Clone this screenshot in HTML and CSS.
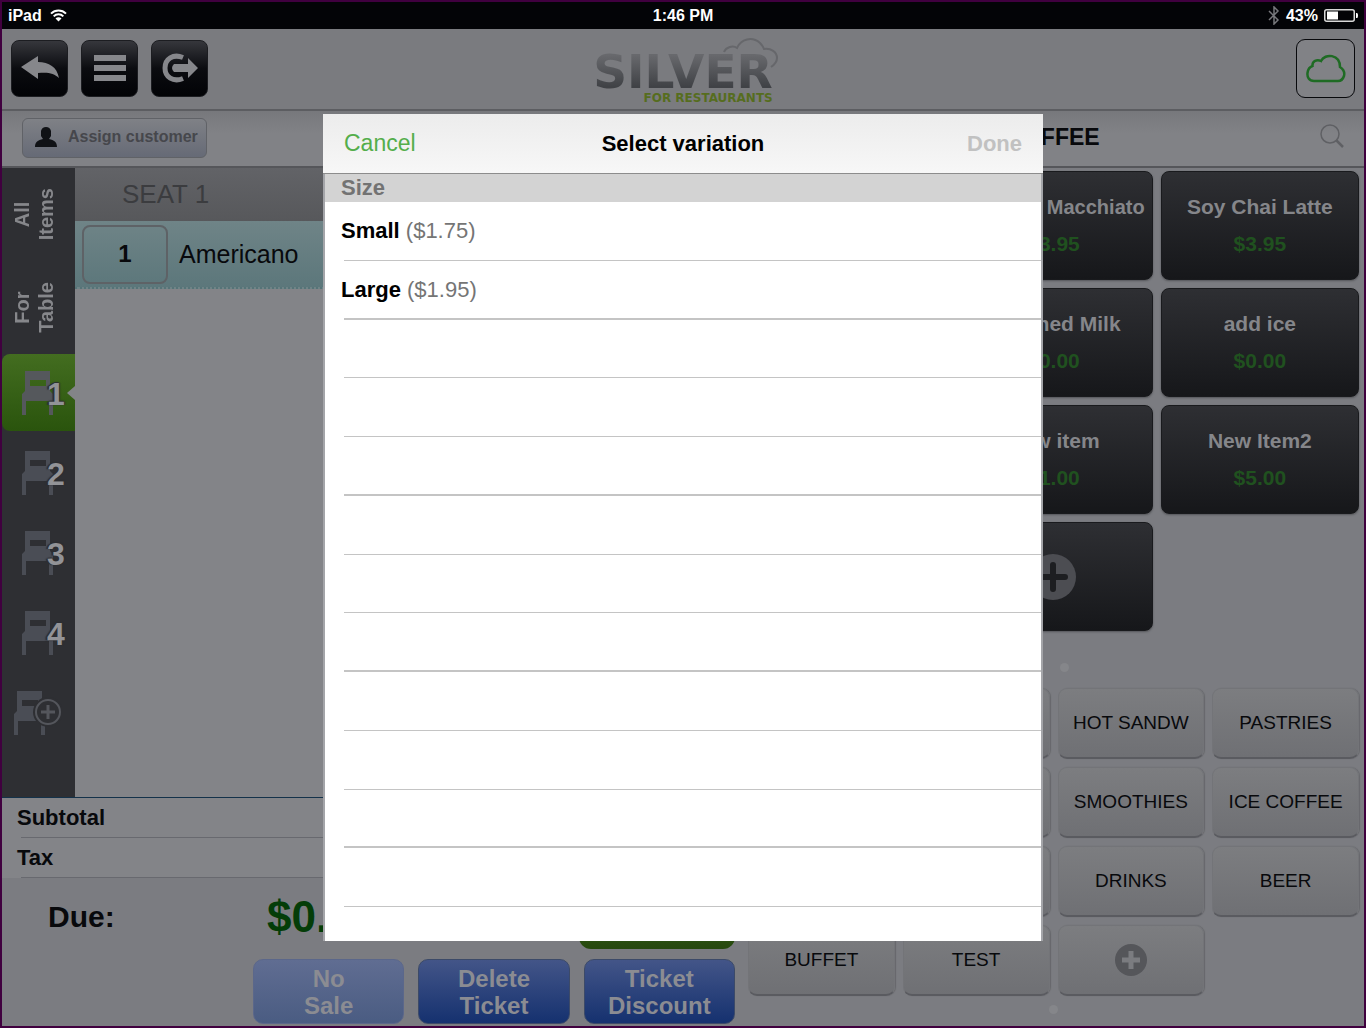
FILE: index.html
```html
<!DOCTYPE html>
<html lang="en">
<head>
<meta charset="utf-8">
<meta name="viewport" content="width=device-width, initial-scale=1">
<title>Silver for Restaurants</title>
<link rel="stylesheet" href="styles.css">
</head>
<body>
<svg class="defs" aria-hidden="true">
  <defs>
    <symbol id="chair" viewBox="0 0 32 44"><path fill-rule="evenodd" d="M3 0h25v20l3 3v21h-4V30H4v14H0V23l3-3zM8 9v6h16V9z"/></symbol>
  </defs>
</svg>
<div class="app">
  <div class="status">
    <div class="status-side">
      <span>iPad</span>
      <svg width="17" height="13" viewBox="0 0 17 13" fill="none" stroke="#fff" stroke-width="2"><path d="M1 4.600a10.500 10.500 0 0 1 15 0M3.700 7.400a6.700 6.700 0 0 1 9.600 0"/><path d="M8.500 12.500 5.500 9.400a4.200 4.200 0 0 1 6 0z" fill="#fff" stroke="none"/></svg>
    </div>
    <span>1:46 PM</span>
    <div class="status-side status-right">
      <svg width="12" height="19" viewBox="0 0 12 19" fill="none" stroke="#77787c" stroke-width="1.500"><path d="M1 5l9 9-4 4V1l4 4-9 9"/></svg>
      <span>43%</span>
      <svg width="34" height="13" viewBox="0 0 34 13"><rect x=".75" y=".75" width="29.500" height="11.500" rx="2" fill="none" stroke="#d8d8d8" stroke-width="1.500"/><rect x="3" y="2.500" width="11" height="8" fill="#fff"/><path d="M32 4h1q1 0 1 2.500T33 9h-1z" fill="#fff"/></svg>
    </div>
  </div>

  <header class="topbar">
    <div class="tools">
      <button class="tool" aria-label="Back"><svg width="38" height="24" viewBox="0 0 38 24" fill="#86878b"><path d="M0 11 17 0v6c11 0 19 5 21 16-5-5-11-6-21-5v6z"/></svg></button>
      <button class="tool" aria-label="Menu"><svg width="32" height="28" viewBox="0 0 32 28" fill="#86878b"><path d="M0 1h32v6H0zM0 11h32v6H0zM0 21h32v6H0z"/></svg></button>
      <button class="tool" aria-label="Sign out"><svg width="38" height="30" viewBox="0 0 38 30"><path d="M22 4.500C12 .500 4 6 4 15s8 14.500 18 10.500" fill="none" stroke="#86878b" stroke-width="5"/><path d="M13 11h14V5l10 10-10 10v-6H13q-4-4 0-8z" fill="#86878b"/></svg></button>
    </div>
    <div class="logo">
      <svg class="logo-cloud" width="56" height="30" viewBox="0 0 56 30" fill="none" stroke="#66676b" stroke-width="2"><path d="M1 14c2-5 9-7 13-4C18 1 29-2 37 5q3 3 4 6c7-1 13 3 13 9q0 5-6 9"/></svg>
      <span class="logo-name">SILVER</span>
      <span class="logo-sub">FOR RESTAURANTS</span>
    </div>
    <button class="cloud" aria-label="Cloud sync"><svg width="40" height="30" viewBox="0 0 40 30" fill="none" stroke="#1f6b24" stroke-width="2.500"><path d="M8 28C3 28 1 24 1.500 20c.5-4 2-6 5-7C6 8 11 6 15 8c4-8 19-7 19 6 3 2 5 5 4 9-1 3-3 5-6 5z"/></svg></button>
  </header>

  <main class="columns">
    <section class="order">
      <div class="subbar">
        <button class="assign">
          <svg width="22" height="20" viewBox="0 0 22 20" fill="#101216"><path d="M6 9V4q1-4 5-4t5 4v5l-2 3c5 1 8 3 8 8H0c0-5 3-7 8-8z"/></svg>
          Assign customer
        </button>
      </div>
      <div class="ticket">
        <nav class="seats" aria-label="Seats">
          <button class="seat-text"><span>All<br>Items</span></button>
          <button class="seat-text"><span>For<br>Table</span></button>
          <button class="seat active"><svg width="32" height="44"><use href="#chair"/></svg><span class="num">1</span></button>
          <button class="seat"><svg width="32" height="44"><use href="#chair"/></svg><span class="num">2</span></button>
          <button class="seat"><svg width="32" height="44"><use href="#chair"/></svg><span class="num">3</span></button>
          <button class="seat"><svg width="32" height="44"><use href="#chair"/></svg><span class="num">4</span></button>
          <button class="seat seat-add" aria-label="Add seat"><svg width="48" height="44"><use href="#chair" width="32" height="44"/><circle cx="34" cy="21" r="15" fill="#2e2f33" stroke="none"/><circle cx="34" cy="21" r="12" fill="#2e2f33" stroke="#54565c" stroke-width="2"/><path d="M34 14v14M27 21h14" stroke="#54565c" stroke-width="3"/></svg></button>
        </nav>
        <div class="lines">
          <h2 class="seat-title">SEAT 1</h2>
          <div class="line">
            <input class="qty" type="text" value="1" aria-label="Quantity">
            <span>Americano</span>
          </div>
        </div>
      </div>
      <div class="totals">
        <div class="total">Subtotal</div>
        <div class="total">Tax</div>
      </div>
      <div class="pay">
        <div class="due">
          <span class="due-label">Due:</span>
          <span class="due-sum">$0.00</span>
          <button class="pay-btn" aria-label="Pay"></button>
        </div>
        <div class="actions">
          <button class="action disabled">No<br>Sale</button>
          <button class="action">Delete<br>Ticket</button>
          <button class="action">Ticket<br>Discount</button>
        </div>
      </div>
    </section>

    <section class="menu">
      <div class="subbar menu-head">
        <h1>COFFEE</h1>
        <button class="search" aria-label="Search"><svg width="24" height="24" viewBox="0 0 24 24" fill="none" stroke="#5f6064" stroke-width="1.500"><circle cx="10" cy="10" r="9"/><path d="M16.500 16.500 23 23" stroke-width="2.500"/></svg></button>
      </div>
      <div class="items">
        <button class="item mid"><span class="long">Caramel Macchiato</span><b>$3.95</b></button>
        <button class="item"><span>Soy Chai Latte</span><b>$3.95</b></button>
        <button class="item mid"><span>Steamed Milk</span><b>$0.00</b></button>
        <button class="item"><span>add ice</span><b>$0.00</b></button>
        <button class="item mid"><span>New item</span><b>$1.00</b></button>
        <button class="item"><span>New Item2</span><b>$5.00</b></button>
        <button class="item mid" aria-label="Add item"><svg width="46" height="46" viewBox="0 0 46 46"><circle cx="23" cy="23" r="23" fill="#4c4d52"/><path d="M23 11v24M11 23h24" stroke="#1d1e21" stroke-width="6" stroke-linecap="round"/></svg></button>
      </div>
      <div class="pager"><i></i></div>
      <div class="cats">
        <button class="cat second" aria-label="Category"></button>
        <button class="cat">HOT SANDW</button>
        <button class="cat">PASTRIES</button>
        <button class="cat second" aria-label="Category"></button>
        <button class="cat">SMOOTHIES</button>
        <button class="cat">ICE COFFEE</button>
        <button class="cat second" aria-label="Category"></button>
        <button class="cat">DRINKS</button>
        <button class="cat">BEER</button>
        <button class="cat">BUFFET</button>
        <button class="cat">TEST</button>
        <button class="cat" aria-label="Add category"><svg width="32" height="32" viewBox="0 0 32 32"><circle cx="16" cy="16" r="16" fill="#55565a"/><path d="M16 7v18M7 16h18" stroke="#7b7c80" stroke-width="5"/></svg></button>
      </div>
      <div class="pager"><i></i></div>
    </section>
  </main>

  <div class="overlay">
    <div class="dialog" role="dialog" aria-labelledby="dialog-title">
      <div class="dialog-head">
        <button class="cancel">Cancel</button>
        <h2 id="dialog-title">Select variation</h2>
        <button class="done" disabled>Done</button>
      </div>
      <div class="dialog-body">
        <h3>Size</h3>
        <ul class="options">
          <li><button><b>Small</b> ($1.75)</button></li>
          <li><button><b>Large</b> ($1.95)</button></li>
          <li></li><li></li><li></li><li></li><li></li>
          <li></li><li></li><li></li><li></li><li></li>
        </ul>
      </div>
    </div>
  </div>
</div>
</body>
</html>
```
FILE: styles.css
```css
* { box-sizing: border-box; }
body { margin: 0; font-family: "Liberation Sans", Arial, sans-serif; color: #08090c; }
button, input { font: inherit; color: inherit; background: none; border: 0; padding: 0; margin: 0; }
h1, h2, h3, ul { margin: 0; padding: 0; }
svg { display: block; flex: none; }
.defs { position: absolute; width: 0; height: 0; }

.app {
  position: relative;
  display: flex;
  flex-direction: column;
  min-height: 100vh;
  border: 2px solid #40003f;
  background: #7b7c81;
  overflow: hidden;
}

/* Status bar */
.status {
  display: flex;
  align-items: center;
  height: 27px;
  padding: 0 6px;
  background: #030407;
  color: #fff;
  font-size: 16px;
  font-weight: bold;
}
.status-side { flex: 1; display: flex; align-items: center; gap: 8px; }
.status-right { justify-content: flex-end; gap: 6px; }

/* Top bar */
.topbar {
  position: relative;
  display: flex;
  align-items: center;
  justify-content: space-between;
  height: 82px;
  padding: 0 9px 2px;
  background: #7a7b7f;
  border-bottom: 2px solid #5c5d61;
}
.tools { display: flex; gap: 13px; }
.tool {
  display: grid;
  place-items: center;
  width: 57px;
  height: 57px;
  border: 1px solid #1c1d21;
  border-radius: 8px;
  background: linear-gradient(#36373c, #0b0c10 50%, #020306);
}
.logo {
  position: absolute;
  inset: 10px 0 0;
  display: grid;
  justify-content: center;
  justify-items: end;
  align-content: start;
}
.logo-name {
  font: bold 47px/40px "DejaVu Sans", sans-serif;
  padding-top: 13px;
  background: linear-gradient(#68696d 30%, #404246 90%);
  background-clip: text;
  -webkit-background-clip: text;
  color: transparent;
}
.logo-sub { font: bold 12px/12px "DejaVu Sans", sans-serif; color: #566d1e; }
.logo-cloud { position: absolute; top: -1px; left: calc(50% + 40px); }
.cloud {
  display: grid;
  place-items: center;
  width: 59px;
  height: 59px;
  border: 1px solid #08090c;
  border-radius: 9px;
  background: #818286;
}

/* Columns */
.columns { flex: 1; display: grid; grid-template-columns: 740fr 622fr; }
.order, .menu { display: flex; flex-direction: column; min-width: 0; }
.subbar {
  display: flex;
  align-items: center;
  height: 57px;
  padding: 0 20px 2px;
  background: linear-gradient(#77787c, #818286 40%);
  border-bottom: 2px solid #55565a;
}
.assign {
  display: flex;
  align-items: center;
  gap: 11px;
  width: 185px;
  height: 40px;
  padding: 0 0 2px 12px;
  border: 1px solid #606267;
  border-radius: 6px;
  background: linear-gradient(#7f8186, #666a76);
  color: #46474c;
  font-size: 16px;
  font-weight: bold;
  white-space: nowrap;
}

.ticket { flex: 1; display: flex; background: #838488; }
.seats { width: 73px; background: #2e2f33; }
.seats button { display: flex; align-items: center; justify-content: center; width: 100%; }
.seat-text { height: 93px; color: #86878b; font-size: 20px; font-weight: bold; line-height: 24px; }
.seat-text span { writing-mode: vertical-rl; transform: rotate(180deg); padding-left: 10px; }
.seats .seat { position: relative; justify-content: flex-start; height: 77px; margin-bottom: 3px; padding-left: 20px; fill: #4a4d55; }
.seats .active {
  border-radius: 8px 0 0 8px;
  background: linear-gradient(#436d20, #2a540d);
  fill: #55585c;
}
.active::after {
  content: "";
  position: absolute;
  right: 0;
  top: 32px;
  border: 7px solid transparent;
  border-left: 0;
  border-right: 8px solid #838488;
}
.num {
  position: absolute;
  left: 45px;
  top: 22px;
  color: #929397;
  font-size: 32px;
  font-weight: bold;
  line-height: 36px;
  text-shadow: -2px 0 1px #2e2f33, 1px 0 1px #2e2f33, 0 -1px 1px #2e2f33;
}
.seats .seat-add { padding-left: 12px; }

.lines { flex: 1; }
.seat-title {
  height: 53px;
  padding-left: 47px;
  background: linear-gradient(#626367, #57585b);
  color: #3b3c3f;
  font-size: 26px;
  font-weight: normal;
  line-height: 52px;
}
.line {
  display: flex;
  align-items: center;
  gap: 11px;
  height: 68px;
  padding-left: 7px;
  border-bottom: 2px dotted #567478;
  background: linear-gradient(#6f8487, #5c777b);
  font-size: 25px;
}
.qty {
  width: 86px;
  height: 59px;
  border: 2px solid #5e6266;
  border-radius: 8px;
  font-size: 24px;
  font-weight: bold;
  text-align: center;
}

.totals { border-top: 1px solid #14324a; background: #838488; font-size: 22px; font-weight: bold; }
.total { position: relative; height: 40px; padding-left: 15px; line-height: 40px; }
.total::after { content: ""; position: absolute; left: 19px; right: 0; bottom: 0; border-bottom: 1px solid #68696f; }

.pay { padding: 7px 7px 2px 46px; }
.due { display: grid; grid-template-columns: 219px 1fr 156px; align-items: center; height: 64px; font-weight: bold; }
.due-label { font-size: 30px; }
.due-sum { font-size: 44px; line-height: 60px; color: #043d08; }
.pay-btn { height: 64px; border-radius: 12px; background: linear-gradient(#43701f, #26480e); }
.actions { display: grid; grid-template-columns: repeat(3, 1fr); gap: 14px; margin: 10px 0 0 205px; }
.action {
  height: 65px;
  border: 1px solid #3c4a68;
  border-radius: 10px;
  background: linear-gradient(#435588, #15316f);
  color: #8b8c92;
  font-size: 24px;
  font-weight: bold;
  line-height: 27px;
}
.action.disabled { border-color: #5b678a; background: linear-gradient(#606d92, #4a5c82); }

/* Menu side */
.menu-head { position: relative; justify-content: center; margin-bottom: 3px; }
.menu-head h1 { font-size: 23px; }
.search { position: absolute; right: 20px; top: 13px; }
.items {
  display: grid;
  grid-template-columns: repeat(3, 1fr);
  grid-auto-rows: 109px;
  gap: 8px;
  padding: 0 5px 0 6px;
}
.item {
  grid-column: 3;
  display: flex;
  flex-direction: column;
  align-items: center;
  justify-content: center;
  gap: 13px;
  border: 1px solid #191a1d;
  border-radius: 8px;
  background: linear-gradient(#2e2f33, #16171a);
  box-shadow: 0 1px 2px #55565a;
  color: #85868a;
  font-size: 21px;
  font-weight: bold;
  line-height: 24px;
  white-space: nowrap;
}
.item.mid { grid-column: 2; }
.item b { color: #20511f; }
.item .long { font-size: 20px; }
.pager { display: grid; place-items: center; padding: 32px 0 16px 22px; }
.pager i { width: 9px; height: 9px; border-radius: 50%; background: #85868a; }
.cats {
  display: grid;
  grid-template-columns: repeat(4, 1fr);
  grid-auto-rows: 71px;
  gap: 8px;
  padding: 0 5px 0 6px;
}
.cat {
  display: grid;
  place-items: center;
  border: 1px solid #737478;
  border-bottom: 2px solid #5a5b60;
  border-radius: 9px;
  background: linear-gradient(#7c7d80, #6f7074);
  box-shadow: 1px 0 1px #66676b;
  font-size: 19px;
  white-space: nowrap;
}
.cat.second { grid-column: 2; }
.cats + .pager { padding: 9px 0 0; }

/* Dialog */
.overlay {
  position: absolute;
  inset: 0;
  display: flex;
  justify-content: center;
  padding: 112px 0 85px;
}
.dialog { display: flex; flex-direction: column; width: 720px; max-width: 100%; }
.dialog-head {
  display: grid;
  grid-template-columns: 1fr auto 1fr;
  align-items: center;
  height: 60px;
  padding: 0 21px;
  border-bottom: 1px solid #8c8c8c;
  background: linear-gradient(#ececec, #f7f7f7);
  color: #000;
  font-size: 22px;
}
.dialog-head h2 { font-size: 22px; }
.cancel { justify-self: start; color: #54ae4b; font-size: 23px; }
.done { justify-self: end; color: #c1c1c1; font-weight: bold; }
.dialog-body {
  flex: 1;
  display: flex;
  flex-direction: column;
  border: solid #a4a5a9;
  border-width: 0 2px;
  background: #fff;
}
.dialog-body h3 { height: 28px; padding-left: 16px; background: #d3d3d3; color: #737373; font-size: 22px; line-height: 28px; }
.options { flex: 1; display: flex; flex-direction: column; padding-bottom: 34px; list-style: none; }
.options li { flex: 1; position: relative; display: flex; }
.options li::after { content: ""; position: absolute; left: 19px; right: 0; bottom: 0; border-bottom: 1px solid #c4c4c4; }
.options li:nth-child(3n + 2)::after { border-bottom-width: 2px; }
.options button { flex: 1; padding-left: 16px; text-align: left; color: #757575; font-size: 22px; }
.options b { color: #000; }
```
